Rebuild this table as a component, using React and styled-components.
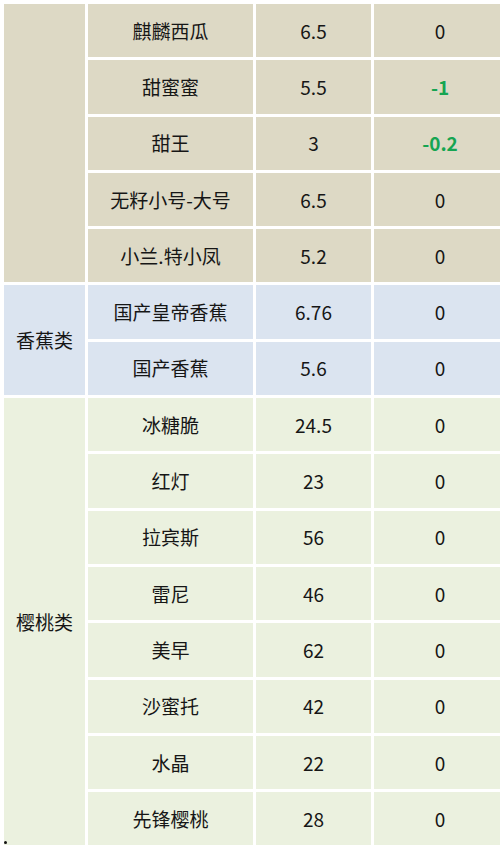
import React from 'react';
import styled, { createGlobalStyle } from 'styled-components';

const GlobalStyle = createGlobalStyle`
  html, body {
    margin: 0;
    padding: 0;
    background: #ffffff;
    overflow: hidden;
  }
  body {
    font-family: "Noto Sans CJK SC", "Noto Sans", sans-serif;
  }
`;

const sectionColors = {
  tan: '#ddd9c5',
  blue: '#dbe4f0',
  green: '#ebf1df',
};

const Page = styled.div`
  position: relative;
  width: 500px;
  height: 849px;
  overflow: hidden;
  padding: 1px 0 0 1px;
  box-sizing: border-box;
`;

const PriceTable = styled.table`
  border-collapse: collapse;
  table-layout: fixed;
  width: 505px;
`;

const Col = styled.col`
  width: ${(props) => props.$w}px;
`;

const Cell = styled.td`
  height: 56.3px;
  box-sizing: border-box;
  padding: 0;
  border: 3px solid #ffffff;
  background: ${(props) => sectionColors[props.$tone]};
  text-align: center;
  vertical-align: middle;
  font-size: 19px;
  line-height: 24px;
  color: ${(props) => (props.$down ? '#16a552' : '#161616')};
  font-weight: ${(props) => (props.$down ? 700 : 400)};
  white-space: nowrap;
`;

const Dot = styled.span`
  position: absolute;
  left: 4px;
  top: 841px;
  width: 3px;
  height: 3px;
  border-radius: 50%;
  background: #111;
`;

const columns = [84, 168, 118, 135];

const sections = [
  {
    label: '',
    tone: 'tan',
    rows: [
      ['麒麟西瓜', '6.5', '0'],
      ['甜蜜蜜', '5.5', '-1'],
      ['甜王', '3', '-0.2'],
      ['无籽小号-大号', '6.5', '0'],
      ['小兰.特小凤', '5.2', '0'],
    ],
  },
  {
    label: '香蕉类',
    tone: 'blue',
    rows: [
      ['国产皇帝香蕉', '6.76', '0'],
      ['国产香蕉', '5.6', '0'],
    ],
  },
  {
    label: '樱桃类',
    tone: 'green',
    rows: [
      ['冰糖脆', '24.5', '0'],
      ['红灯', '23', '0'],
      ['拉宾斯', '56', '0'],
      ['雷尼', '46', '0'],
      ['美早', '62', '0'],
      ['沙蜜托', '42', '0'],
      ['水晶', '22', '0'],
      ['先锋樱桃', '28', '0'],
    ],
  },
];

export default function App() {
  return (
    <>
      <GlobalStyle />
      <Page>
        <PriceTable>
          <colgroup>
            {columns.map((w, i) => (
              <Col key={i} $w={w} />
            ))}
          </colgroup>
          <tbody>
            {sections.map((section) =>
              section.rows.map(([name, price, change], i) => (
                <tr key={`${section.tone}-${name}`}>
                  {i === 0 && (
                    <Cell $tone={section.tone} rowSpan={section.rows.length}>
                      {section.label}
                    </Cell>
                  )}
                  <Cell $tone={section.tone}>{name}</Cell>
                  <Cell $tone={section.tone}>{price}</Cell>
                  <Cell $tone={section.tone} $down={change.startsWith('-')}>
                    {change}
                  </Cell>
                </tr>
              ))
            )}
          </tbody>
        </PriceTable>
        <Dot />
      </Page>
    </>
  );
}
